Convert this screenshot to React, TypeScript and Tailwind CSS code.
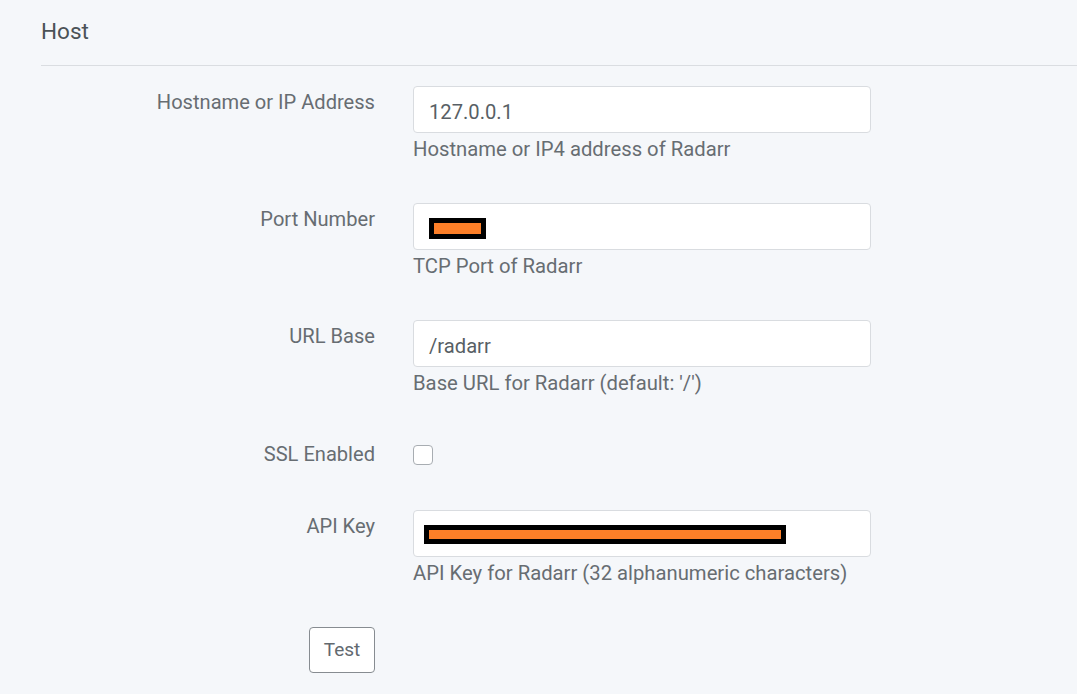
import React from 'react';

const font = { fontFamily: 'Roboto, "Liberation Sans", sans-serif' };

function Redacted({ className }: { className: string }) {
  return <div className={`border-[5px] border-black bg-[#fd7f28] ${className}`} />;
}

function Field({
  label,
  help,
  children,
}: {
  label: string;
  help: string;
  children: React.ReactNode;
}) {
  return (
    <div className="flex mb-[39px]">
      <label className="w-[334px] shrink-0 text-right pt-[1px] leading-[30px] text-[20.1px] text-[#676d72]">
        {label}
      </label>
      <div className="ml-[38px] w-[458px]">
        <div className="h-[47px] flex items-center pt-[4px] pl-[15px] bg-white border border-[#d9dce0] rounded-[4px] text-[20.2px] leading-[30px] text-[#585f65]">
          {children}
        </div>
        <div className="mt-[1px] text-[20.25px] leading-[30px] text-[#676d72]">{help}</div>
      </div>
    </div>
  );
}

export default function App() {
  return (
    <div className="min-h-screen bg-[#f5f7fa]" style={font}>
      {/* Section header */}
      <div className="ml-[41px] pt-[15px] pb-[17px] border-b border-[#dadde1]">
        <h2 className="text-[22.5px] leading-[33px] text-[#4b5257] font-normal">Host</h2>
      </div>

      <div className="pl-[41px] pt-[20px]">
        <Field label="Hostname or IP Address" help="Hostname or IP4 address of Radarr">
          127.0.0.1
        </Field>

        <Field label="Port Number" help="TCP Port of Radarr">
          <Redacted className="w-[57px] h-[21px]" />
        </Field>

        <Field label="URL Base" help="Base URL for Radarr (default: '/')">
          /radarr
        </Field>

        {/* SSL row */}
        <div className="flex h-[39px] mb-[34px]">
          <label className="w-[334px] shrink-0 text-right pt-[2px] leading-[30px] text-[20.1px] text-[#676d72]">
            SSL Enabled
          </label>
          <div className="ml-[38px] pt-[8px]">
            <div className="w-[20px] h-[20px] bg-white border border-[#a8adb2] rounded-[4px]" />
          </div>
        </div>

        <Field label="API Key" help="API Key for Radarr (32 alphanumeric characters)">
          <Redacted className="w-[362px] h-[19px] -ml-[5px] -mt-[2px]" />
        </Field>

        {/* Test button */}
        <div className="w-[334px] flex justify-end">
          <button className="w-[66px] h-[46px] bg-white border border-[#878c91] rounded-[4px] text-[19px] text-[#62696f]">
            Test
          </button>
        </div>
      </div>
    </div>
  );
}
